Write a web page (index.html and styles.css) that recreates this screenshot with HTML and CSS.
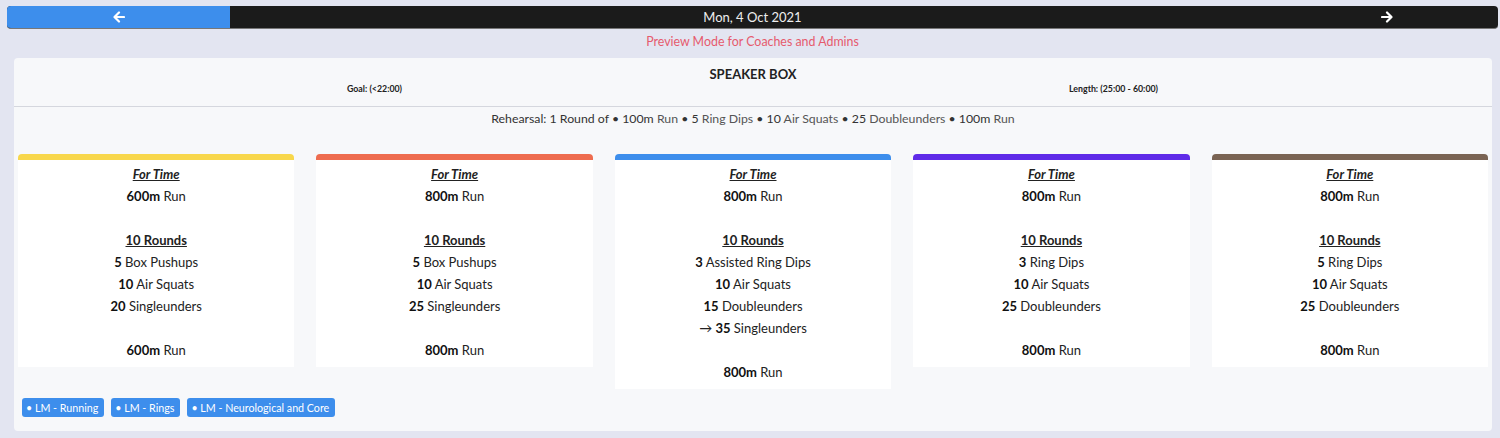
FILE: index.html
```html
<!DOCTYPE html>
<html lang="en">
<head>
    <meta charset="UTF-8">
    <meta name="viewport" content="width=device-width, initial-scale=1.0">
    <title>Speaker Box</title>
    <link rel="stylesheet" href="styles.css">
</head>
<body>
    <!-- Day navigation -->
    <div class="day-nav">
        <button class="nav-btn nav-prev">
            <svg width="12" height="12" viewBox="0 0 12 12"><path d="M11 6H2M6 1.5L1.5 6 6 10.5" fill="none" stroke="#fff" stroke-width="2.2" stroke-linecap="round" stroke-linejoin="round"/></svg>
        </button>
        <div class="nav-date">Mon, 4 Oct 2021</div>
        <button class="nav-btn nav-next">
            <svg width="12" height="12" viewBox="0 0 12 12"><path d="M1 6h9M6 1.5L10.5 6 6 10.5" fill="none" stroke="#fff" stroke-width="2.2" stroke-linecap="round" stroke-linejoin="round"/></svg>
        </button>
    </div>

    <p class="preview-note">Preview Mode for Coaches and Admins</p>

    <!-- Workout card -->
    <div class="workout">
        <div class="workout-head">
            <h2>SPEAKER BOX</h2>
            <div class="meta">
                <span>Goal: (&lt;22:00)</span>
                <span>Length: (25:00 - 60:00)</span>
            </div>
        </div>

        <p class="rehearsal">Rehearsal: 1 Round of &bull; 100m <span class="mv">Run</span> &bull; 5 <span class="mv">Ring Dips</span> &bull; 10 <span class="mv">Air Squats</span> &bull; 25 <span class="mv">Doubleunders</span> &bull; 100m <span class="mv">Run</span></p>

        <div class="levels">
            <div class="level yellow">
                <p class="title">For Time</p>
                <p><b>600m</b> Run</p>
                <p>&nbsp;</p>
                <p class="rounds">10 Rounds</p>
                <p><b>5</b> Box Pushups</p>
                <p><b>10</b> Air Squats</p>
                <p><b>20</b> Singleunders</p>
                <p>&nbsp;</p>
                <p><b>600m</b> Run</p>
            </div>
            <div class="level orange">
                <p class="title">For Time</p>
                <p><b>800m</b> Run</p>
                <p>&nbsp;</p>
                <p class="rounds">10 Rounds</p>
                <p><b>5</b> Box Pushups</p>
                <p><b>10</b> Air Squats</p>
                <p><b>25</b> Singleunders</p>
                <p>&nbsp;</p>
                <p><b>800m</b> Run</p>
            </div>
            <div class="level blue">
                <p class="title">For Time</p>
                <p><b>800m</b> Run</p>
                <p>&nbsp;</p>
                <p class="rounds">10 Rounds</p>
                <p><b>3</b> Assisted Ring Dips</p>
                <p><b>10</b> Air Squats</p>
                <p><b>15</b> Doubleunders</p>
                <p>&rarr; <b>35</b> Singleunders</p>
                <p>&nbsp;</p>
                <p><b>800m</b> Run</p>
            </div>
            <div class="level purple">
                <p class="title">For Time</p>
                <p><b>800m</b> Run</p>
                <p>&nbsp;</p>
                <p class="rounds">10 Rounds</p>
                <p><b>3</b> Ring Dips</p>
                <p><b>10</b> Air Squats</p>
                <p><b>25</b> Doubleunders</p>
                <p>&nbsp;</p>
                <p><b>800m</b> Run</p>
            </div>
            <div class="level brown">
                <p class="title">For Time</p>
                <p><b>800m</b> Run</p>
                <p>&nbsp;</p>
                <p class="rounds">10 Rounds</p>
                <p><b>5</b> Ring Dips</p>
                <p><b>10</b> Air Squats</p>
                <p><b>25</b> Doubleunders</p>
                <p>&nbsp;</p>
                <p><b>800m</b> Run</p>
            </div>
        </div>

        <div class="tags">
            <span class="tag">&bull; LM - Running</span>
            <span class="tag">&bull; LM - Rings</span>
            <span class="tag">&bull; LM - Neurological and Core</span>
        </div>
    </div>
</body>
</html>
```

FILE: styles.css
```css
body {
    font-family: Lato, "Open Sans", sans-serif;
    margin: 0;
    padding: 6px 2px 7px 7px;
    background-color: #e3e5f1;
    color: #222;
    font-size: 13px;
}
p {
    margin: 0;
}

/* day navigation */
.day-nav {
    display: flex;
    height: 23px;
    border-radius: 4px;
    overflow: hidden;
    background-color: #1b1b1b;
    border-bottom: 1px solid #777;
    box-sizing: border-box;
}
.nav-btn {
    width: 223px;
    border: 0;
    padding: 0;
    background: transparent;
    display: flex;
    align-items: center;
    justify-content: center;
    cursor: pointer;
}
.nav-prev {
    background-color: #3d8eec;
}
.nav-date {
    flex: 1;
    color: #eee;
    text-align: center;
    line-height: 22px;
    font-size: 13px;
}
.preview-note {
    color: #e65a6d;
    font-size: 12.4px;
    text-align: center;
    line-height: 25px;
    margin-bottom: 4px;
}

/* workout card */
.workout {
    margin: 0 6px 0 7px;
    background-color: #f7f8fa;
    border-radius: 4px;
    padding-bottom: 14px;
}
.workout-head {
    border-bottom: 1px solid #d5d7de;
    padding: 8px 0 12px;
    text-align: center;
}
.workout-head h2 {
    margin: 0;
    font-size: 13px;
    line-height: 16px;
    font-weight: 700;
}
.meta {
    display: flex;
    font-size: 8.8px;
    font-weight: 700;
    margin-top: 2px;
    line-height: 10px;
}
.meta span {
    flex: 1;
    padding-right: 18px;
}
.rehearsal {
    text-align: center;
    color: #333;
    font-size: 12.3px;
    line-height: 24px;
}
.mv {
    color: #555;
}

/* scaled levels */
.levels {
    display: flex;
    align-items: flex-start;
    gap: 22px;
    padding: 0 4px;
    margin-top: 23px;
}
.level {
    flex: 1;
    background-color: #fff;
    border-top: 6px solid;
    border-radius: 4px 4px 0 0;
    padding: 3px 0 6px;
    text-align: center;
    line-height: 22px;
}
.level b {
    font-weight: 700;
    color: #111;
}
.level .title {
    font-weight: 700;
    font-style: italic;
    text-decoration: underline;
}
.level .rounds {
    font-weight: 700;
    text-decoration: underline;
}
.yellow { border-color: #f8d74b; }
.orange { border-color: #ee6c4f; }
.blue { border-color: #3d8eec; }
.purple { border-color: #5f2be8; }
.brown { border-color: #7a6453; }

/* tags */
.tags {
    display: flex;
    gap: 7px;
    padding: 9px 8px 0;
}
.tag {
    background-color: #3d8eec;
    color: #fff;
    font-size: 10.7px;
    line-height: 19px;
    padding: 0 6px 0 4px;
    border-radius: 3px;
}
```
